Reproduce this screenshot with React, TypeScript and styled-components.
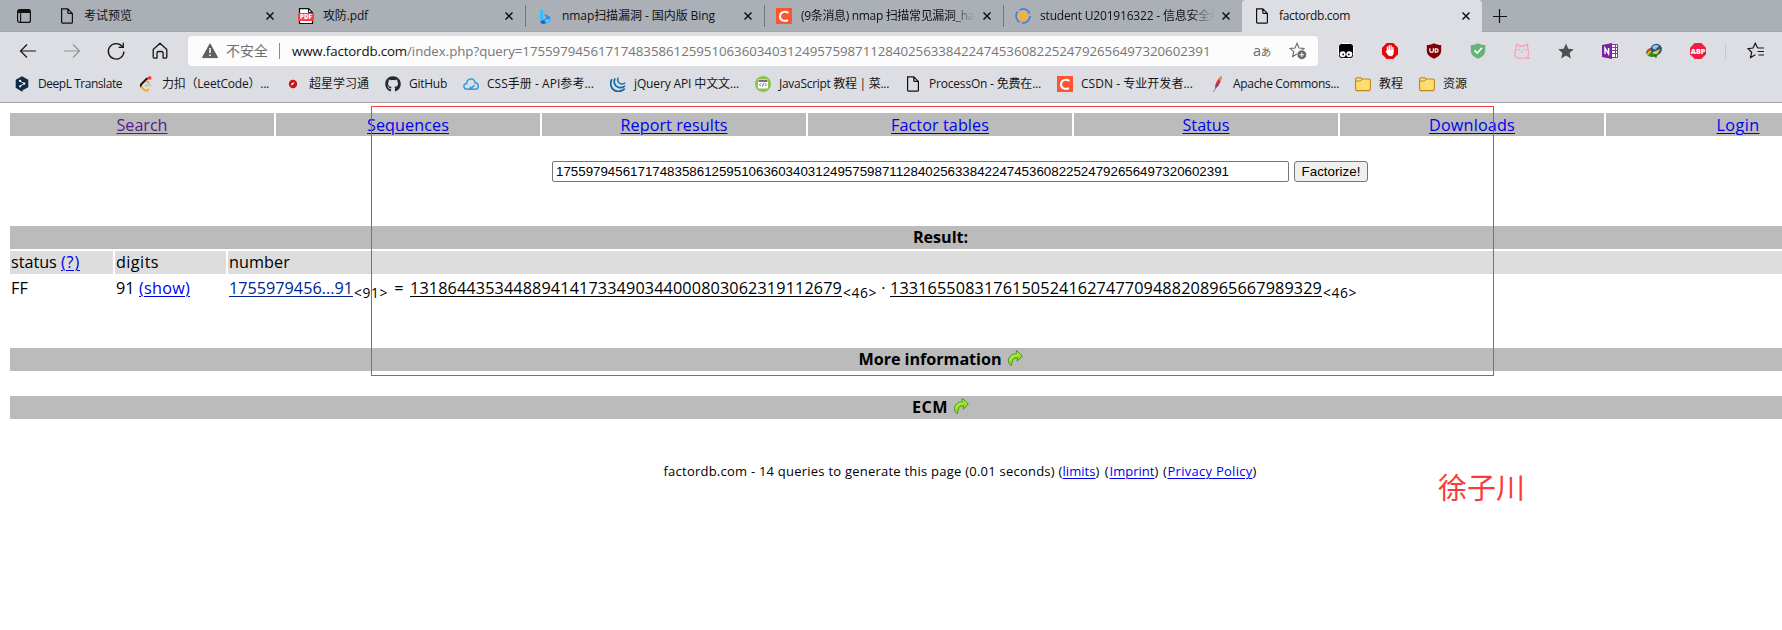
import React, { useLayoutEffect, useRef } from 'react';
import styled, { createGlobalStyle } from 'styled-components';
import { FaGithub } from 'react-icons/fa';

const GlobalStyle = createGlobalStyle`
  *, *::before, *::after { box-sizing: border-box; }
  html, body { margin: 0; padding: 0; background: #fff; overflow: hidden; }
  svg { display: block; flex: none; }
`;

const uiFont = `'Open Sans', 'Noto Sans CJK SC', sans-serif`;

/* ---------- text that is tracked to a given advance width ---------- */

const Tracked = styled.span`
  white-space: pre;
`;

function Fit({ w, children, className }: { w: number; children: React.ReactNode; className?: string }) {
  const ref = useRef<HTMLSpanElement>(null);
  useLayoutEffect(() => {
    const el = ref.current;
    if (!el) return;
    el.style.letterSpacing = '0px';
    const n = (el.textContent || '').length;
    el.style.letterSpacing = `${(w - el.getBoundingClientRect().width) / n}px`;
  }, [w]);
  return <Tracked ref={ref} className={className}>{children}</Tracked>;
}

/* ---------- browser frame ---------- */

const Screen = styled.div`
  position: relative;
  width: 1782px;
  height: 630px;
  overflow: hidden;
  background: #fff;
  font-family: ${uiFont};
`;

const TabStrip = styled.div`
  display: flex;
  height: 32px;
  background: #abafb6;
  box-shadow: inset 0 -1px 0 #a1a4ac;
`;

const TabMenu = styled.div`
  display: flex;
  align-items: center;
  width: 47px;
  padding-left: 17px;
`;

const Tab = styled.div<{ $active?: boolean; $divider?: boolean }>`
  display: flex;
  align-items: center;
  width: ${p => (p.$active ? 240 : 239)}px;
  height: 32px;
  padding: 0 12px 0 11px;
  border-left: 1px solid transparent;
  border-image: ${p => (p.$divider ? 'linear-gradient(transparent 6px, #73767c 6px, #73767c 26px, transparent 26px) 1' : 'none')};
  background: ${p => (p.$active ? '#dddee3' : 'transparent')};
  border-radius: ${p => (p.$active ? '4px 4px 0 0' : '0')};
`;

const TabTitle = styled.div<{ $fade?: boolean }>`
  flex: 1;
  min-width: 0;
  margin-left: 9px;
  margin-right: 8px;
  overflow: hidden;
  white-space: nowrap;
  font-size: 12px;
  line-height: 20px;
  color: #111;
  ${p => p.$fade && 'mask-image: linear-gradient(90deg, #000 calc(100% - 24px), transparent);'}
`;

const NewTab = styled.div`
  display: flex;
  align-items: center;
  padding-left: 11px;
`;

const Toolbar = styled.div`
  display: flex;
  align-items: center;
  height: 38px;
  background: #dddee3;
`;

const NavButtons = styled.div`
  display: flex;
  gap: 24px;
  width: 188px;
  padding-left: 18px;
`;

const AddressBar = styled.div`
  display: flex;
  align-items: center;
  width: 1130px;
  height: 30px;
  padding: 0 11px 0 14px;
  background: #fcfcfd;
  border-radius: 4px;
`;

const Insecure = styled.span`
  flex: none;
  margin-left: 8px;
  margin-right: 11px;
  width: 42px;
  font-size: 14px;
  line-height: 20px;
  color: #707070;
  white-space: nowrap;
`;

const Divider = styled.span<{ $light?: boolean }>`
  flex: none;
  width: 1px;
  height: 16px;
  background: ${p => (p.$light ? '#c6c7cb' : '#8a8a8a')};
`;

const Url = styled.span`
  flex: none;
  display: flex;
  margin-left: 12px;
  font-size: 13.3px;
  line-height: 20px;
  color: #767676;
`;

const Host = styled(Fit)`
  color: #111;
`;

const Translate = styled.span`
  flex: none;
  width: 18px;
  margin-left: auto;
  margin-right: 18px;
  font-size: 14.5px;
  line-height: 20px;
  letter-spacing: -0.3px;
  color: #6a6a6a;
  white-space: nowrap;
`;

const SmallKana = styled.span`
  font-size: 10.5px;
`;

const Extensions = styled.div`
  display: flex;
  align-items: center;
  gap: 28px;
  padding-left: 20px;
`;

const ExtensionEnd = styled.div`
  display: flex;
  align-items: center;
  gap: 21px;
  padding-left: 19px;
`;

const Bookmarks = styled.div`
  display: flex;
  align-items: flex-start;
  gap: 16px;
  height: 33px;
  padding: 4px 0 0 14px;
  background: #dddee3;
  border-bottom: 1px solid #a0a1a6;
`;

const Bookmark = styled.div`
  display: flex;
  align-items: center;
  gap: 8px;
  height: 20px;
  font-size: 12px;
  line-height: 20px;
  color: #161616;
`;

/* ---------- page ---------- */

const Page = styled.div`
  width: 1920px;
  padding-top: 10px;
  font-size: 16.2px;
  line-height: 23px;
  color: #000;
`;

const Sheet = styled.div`
  width: 1860px;
  margin-left: 10px;
`;

const Menu = styled.nav`
  display: grid;
  grid-template-columns: repeat(7, 264px);
  gap: 2px;
`;

const MenuCell = styled.div`
  height: 23px;
  padding-top: 1px;
  text-align: center;
  background: #bbb;
`;

const Link = styled.a<{ $color?: string }>`
  color: ${p => p.$color || '#0000ee'};
  text-decoration: underline;
  text-decoration-thickness: 1px;
  text-underline-offset: 2px;
  text-decoration-skip-ink: auto;
`;

const Query = styled.form`
  display: flex;
  justify-content: center;
  gap: 5px;
  margin-top: 25px;
`;

const QueryInput = styled.div`
  width: 737px;
  height: 21px;
  padding: 0 3px;
  border: 1px solid #767676;
  border-radius: 2px;
  font: 13.333px/19px 'Liberation Sans', Arial, sans-serif;
`;

const Submit = styled.button`
  width: 74px;
  height: 21px;
  padding: 0;
  border: 1px solid #767676;
  border-radius: 3px;
  background: #efefef;
  color: #000;
  font: 13.333px/19px 'Liberation Sans', Arial, sans-serif;
`;

const Bar = styled.div<{ $top: number }>`
  display: flex;
  justify-content: center;
  gap: 5px;
  height: 23px;
  margin-top: ${p => p.$top}px;
  padding-left: 1px;
  background: #bbb;
  font-weight: 700;
`;

const Row = styled.div<{ $head?: boolean }>`
  display: grid;
  grid-template-columns: 103px 111px 1642px;
  gap: 2px;
  height: 23px;
  margin-top: 2px;
  > div {
    padding-top: ${p => (p.$head ? 0 : 1)}px;
    padding-left: 1px;
    white-space: nowrap;
    background: ${p => (p.$head ? '#ddd' : 'transparent')};
  }
`;

const Factors = styled.div`
  display: flex;
`;

const Sub = styled(Fit)`
  margin-left: 1px;
  padding-top: 4px;
  font-size: 13.8px;
`;

const Operator = styled.span<{ $w: number }>`
  width: ${p => p.$w}px;
  text-align: center;
`;

const Footer = styled.footer`
  margin-top: 41px;
  text-align: center;
  font-size: 13px;
  white-space: nowrap;
`;

const Frame = styled.div`
  position: absolute;
  left: 371px;
  top: 106px;
  width: 1123px;
  height: 270px;
  border: 1px solid #fb3a3a;
`;

const Signature = styled.div`
  position: absolute;
  left: 1438px;
  top: 468px;
  font-size: 29px;
  line-height: 40px;
  color: #fb3a3a;
  white-space: nowrap;
`;

/* ---------- icons ---------- */

const Svg = ({ s = 16, children }: { s?: number; children: React.ReactNode }) => (
  <svg width={s} height={s} viewBox={`0 0 ${s} ${s}`} fill="none">{children}</svg>
);

const PageIcon = () => (
  <Svg><path d="M2.600.800h6.200l4.600 4.600v8.800a1 1 0 0 1-1 1H3.600a1 1 0 0 1-1-1zM8.800.800v3.600a1 1 0 0 0 1 1h3.600" stroke="#111" strokeWidth="1.200" /></Svg>
);
const CloseIcon = () => (
  <svg width="8" height="8" viewBox="0 0 8 8"><path d="M.5.5l7 7M7.500.500l-7 7" stroke="#111" strokeWidth="1.500" /></svg>
);
const TabsIcon = () => (
  <svg width="14" height="14" viewBox="0 0 14 14" fill="none">
    <rect x=".6" y=".6" width="12.800" height="12.800" rx="2" stroke="#111" strokeWidth="1.200" />
    <path d="M1 1h12v3H1z" fill="#111" /><path d="M3.600 4v9.400" stroke="#111" strokeWidth="1.100" />
  </svg>
);
const PdfIcon = () => (
  <Svg>
    <path d="M1.500.600h9l4 4v11h-13z" fill="#fff" stroke="#111" strokeWidth="1.200" />
    <path d="M10.500.600v4h4" stroke="#111" />
    <rect x="0" y="5" width="16" height="8" rx="1" fill="#fb4141" />
    <text x="8" y="11.400" textAnchor="middle" fontFamily="Open Sans" fontWeight="800" fontSize="6.200" fill="#fff">PDF</text>
  </Svg>
);
const BingIcon = () => (
  <Svg>
    <path d="M3 1l3.100 1.400v9.400L3 14z" fill="#37bdf8" />
    <path d="M6.900 5.700l5 2.300c1.400.700 1.700 1.800 1.600 3L10 9.600 8.500 9z" fill="#2f8fe8" />
    <path d="M3 14l3.500-2.200L10.300 9.600l2.900.9c.5 1.800-.5 3-1.700 3.700L8 15.800c-2.200.5-4-.2-5-1.800z" fill="#1a62dc" />
    <path d="M7 11.500l5.800-1.300c1 1.800 0 3.200-1.400 4L9 15.600z" fill="#41cdf5" />
  </Svg>
);
const CsdnIcon = () => (
  <Svg>
    <rect width="16" height="16" fill="#fc5531" />
    <path d="M12.400 4.800C8.600 2.500 4.200 4.200 4 8.200c-.1 4.300 4.200 5.600 8 3.900" stroke="#fff" strokeWidth="2" />
  </Svg>
);
const RingIcon = () => (
  <Svg>
    <circle cx="8" cy="8" r="7" stroke="#3d7cd0" strokeWidth="1.500" strokeDasharray="12 2.600" />
    <circle cx="8" cy="8" r="5" fill="#f0b23e" />
  </Svg>
);
const PlusIcon = () => (
  <svg width="14" height="14" viewBox="0 0 14 14"><path d="M6.500 0v14M0 7.500h14" stroke="#111" strokeWidth="1.200" /></svg>
);
const BackIcon = ({ forward }: { forward?: boolean }) => (
  <Svg s={20}>
    <path d={forward ? 'M2 10h16M11 3.500l6.500 6.500-6.500 6.500' : 'M18 10H2M9 3.500L2.500 10 9 16.500'} stroke={forward ? '#929397' : '#151515'} strokeWidth="1.200" />
  </Svg>
);
const ReloadIcon = () => (
  <Svg s={20}><path d="M17.900 10.500A7.800 7.800 0 1 1 16.300 5.600M17.300 1.800v4.500h-4.700" stroke="#151515" strokeWidth="1.300" /></Svg>
);
const HomeIcon = () => (
  <Svg s={20}><path d="M3.200 8.500L10 2.300l6.800 6.200v7.600a1 1 0 0 1-1 1h-2.700V12a1.500 1.500 0 0 0-1.500-1.500H8.500A1.500 1.500 0 0 0 7 12v5.100H4.200a1 1 0 0 1-1-1z" stroke="#151515" strokeWidth="1.300" strokeLinejoin="round" /></Svg>
);
const WarnIcon = () => (
  <Svg><path d="M8 .8l7.600 13.800H.4z" fill="#5f5f5f" stroke="#5f5f5f" strokeLinejoin="round" /><path d="M8 5v5M8 11.400v1.600" stroke="#fff" strokeWidth="1.500" /></Svg>
);
const StarAddIcon = () => (
  <Svg s={18}>
    <path d="M8 1.300l2 4.700 5 .4-3.800 3.300 1.100 4.700L8 12l-4.400 2.700 1.200-5L1 6.400 6 6z" stroke="#6a6a6a" strokeWidth="1.100" />
    <circle cx="12.800" cy="12.700" r="4.700" fill="#666" stroke="#fcfcfd" strokeWidth=".6" />
    <path d="M12.800 10.400V15M10.500 12.700h4.600" stroke="#fff" strokeWidth="1.100" />
  </Svg>
);
const TamperIcon = () => (
  <Svg>
    <rect x=".5" y=".5" width="15" height="15" rx="3" fill="#000" stroke="#fff" />
    <circle cx="4.700" cy="11.200" r="3" fill="#fff" /><circle cx="11.300" cy="11.200" r="3" fill="#fff" />
    <circle cx="5.200" cy="11.400" r=".9" fill="#000" /><circle cx="10.800" cy="11.400" r=".9" fill="#000" />
  </Svg>
);
const octagon = 'M4.700 0h6.600L16 4.700v6.600L11.300 16H4.700L0 11.300V4.700z';
const AdblockIcon = () => (
  <Svg>
    <path d={octagon} fill="#e5090f" />
    <path d="M5.500 8V4.200M7.300 7.500V2.800M9.100 7.500V3M10.900 8V4.500" stroke="#fff" strokeWidth="1.400" strokeLinecap="round" />
    <path d="M4.800 7h6.800v3c0 2-1 3.200-3 3.200-1.700 0-2.600-.8-3.300-2.200L3.500 8.400l1-.5z" fill="#fff" />
  </Svg>
);
const ShieldIcon = ({ fill, children }: { fill: string; children: React.ReactNode }) => (
  <Svg><path d="M8 .2c2 1.200 4.400 1.700 7.200 1.800v5.500c0 4-3 6.600-7.200 8.300C3.800 14.100.8 11.500.8 7.500V2C3.600 1.900 6 1.400 8 .2z" fill={fill} />{children}</Svg>
);
const UblockIcon = () => (
  <ShieldIcon fill="#800008">
    <path d="M3.900 5.200v2.600c0 2.200 3.500 2.200 3.500 0V5.200M9.200 5.800h1c2.600 0 2.600 3.300 0 3.300h-1z" stroke="#fff" strokeWidth="1.200" />
  </ShieldIcon>
);
const GuardIcon = () => (
  <ShieldIcon fill="#67b279"><path d="M4.500 7.300l2.700 2.800 4.800-5.300" stroke="#fff" strokeWidth="1.700" /></ShieldIcon>
);
const CatIcon = () => (
  <Svg><path d="M2.200 5.500L2.600.900l3 2.100h4.800l3-2.100.4 4.600c1 3 .8 6 .1 8.300l1.400 1.400H4.200C.2 15 .3 8.500 2.200 5.500zM3.800 6.700h2.800M9.400 6.700h2.800M7 8.800h2" stroke="#f9a0b8" strokeWidth="1.300" strokeLinejoin="round" /></Svg>
);
const StarIcon = () => (
  <Svg><path d="M8 .5l2.300 5.200 5.500.5-4.200 3.700 1.300 5.600L8 12.600l-4.900 2.900 1.300-5.600L.2 6.200l5.500-.5z" fill="#4f5052" /></Svg>
);
const OneNoteIcon = () => (
  <Svg>
    <path d="M8 1.500h7.500v13H8z" fill="#fff" stroke="#8a35ad" />
    <path d="M9 4.500h6M9 7.500h6M9 10.500h6M13.500 2v12" stroke="#8a35ad" />
    <path d="M0 2l10-2v16L0 14z" fill="#7a24a1" />
    <path d="M3 11V5.200l3.600 5.600V5" stroke="#fff" strokeWidth="1.400" />
  </Svg>
);
const IdmIcon = () => (
  <Svg>
    <ellipse cx="6.500" cy="9.500" rx="6.400" ry="4.600" fill="#2f8c2d" />
    <path d="M.8 10C2 6.600 5 5 8 5.500" stroke="#e8402a" strokeWidth="1.500" />
    <path d="M1.500 12c1-2.500 3.500-4.500 6-4" stroke="#f8d126" strokeWidth="1.500" />
    <circle cx="10.300" cy="6.300" r="5.600" fill="#27567f" />
    <path d="M6.500 3.500c2-2 5-2 6.500-.5-1 1.800-2.500 1-3 3.500-2 .5-4-1-3.500-3z" fill="#8cc6e6" />
    <path d="M6.500 9.300L14.500 6 11 11.500 7.500 11z" fill="#f2c91c" />
    <path d="M8 11.300h3.500L10 15.800z" fill="#246e28" />
  </Svg>
);
const AbpIcon = () => (
  <Svg>
    <path d={octagon} fill="#ed1e45" />
    <text x="8" y="10.600" textAnchor="middle" fontFamily="Open Sans" fontWeight="800" fontSize="7.200" fill="#fff">ABP</text>
  </Svg>
);
const FavoritesIcon = () => (
  <Svg s={18}><path d="M10.500 5.800L8.300 1.300 6 6l-5 .7 3.700 3.500L3.600 15.500 8.300 12.800M10.500 6h6.500M10.500 9.500H17M11.500 13H17" stroke="#151515" strokeWidth="1.200" /></Svg>
);
const DeeplIcon = () => (
  <Svg>
    <path d="M8 .2l6.300 3.500v7.500L8.500 14.300v1.700l-2.400-1.500-4.400-2.800V3.700z" fill="#0f2b46" />
    <path d="M6 5l4.300 2.600L6.300 10" stroke="#fff" strokeWidth=".9" /><circle cx="6" cy="4.900" r="1.100" fill="#fff" /><circle cx="10.300" cy="7.600" r="1.100" fill="#fff" /><circle cx="6.200" cy="10.300" r="1.100" fill="#fff" />
  </Svg>
);
const LeetIcon = () => (
  <Svg>
    <path d="M9 2.500L3.500 8" stroke="#151515" strokeWidth="1.900" strokeLinecap="round" />
    <path d="M3.500 8c-1 1.200-.8 2.200 0 3" stroke="#151515" strokeWidth="1.900" />
    <path d="M3.500 11l2.500 2.700c1.400 1.400 3 1.200 4.500-.2M9 5.300l1.700 1.400" stroke="#fba51f" strokeWidth="1.900" strokeLinecap="round" />
    <path d="M7.500 9.300h5" stroke="#c9c6c2" strokeWidth="2.200" strokeLinecap="round" /><circle cx="11.700" cy="1.900" r="1.900" fill="#ea4444" />
  </Svg>
);
const ChaoxingIcon = () => (
  <Svg><circle cx="8" cy="8" r="4.200" fill="#c9151b" /><path d="M6.300 9.500c-.6-2 1-3.500 3.200-3L8 8.500z" fill="#fff" /></Svg>
);
const CloudIcon = () => (
  <Svg><path d="M4.300 13.300C-.2 13.300-.2 7.600 3.700 7.500 4 1.500 11.500 1.500 12 6.800c4.500.4 4.200 6.500 0 6.500H7.500L11.500 9M4.300 13.300c2 0 2.500-1 4-2.600" stroke="#2e9fe0" strokeWidth="1.500" /></Svg>
);
const JqueryIcon = () => (
  <Svg>
    <path d="M1.900 3.200C-.7 8 1.300 14.200 6.800 15.200c3.300.5 6-.4 8-2.500" stroke="#0f65a8" strokeWidth="1.700" />
    <path d="M5 2.300c-2 3.600-.4 8 3.500 9 2.600.6 5-.1 6.500-1.500" stroke="#0f65a8" strokeWidth="1.700" />
    <path d="M8.300 1.500c-1.500 2.700-.2 5.400 2.300 6.200 2 .5 3.600 0 4.700-1" stroke="#1673b5" strokeWidth="1.500" />
  </Svg>
);
const RunoobIcon = () => (
  <Svg>
    <circle cx="8" cy="8" r="8" fill="#8bc34a" />
    <rect x="3" y="3.500" width="10" height="9" rx="1" fill="#fff" /><path d="M3.500 5h9" stroke="#38474f" strokeWidth="1.500" />
    <path d="M6 7.300L4.500 8.800 6 10.300M10 7.300l1.500 1.500-1.500 1.500M8.500 7l-1 3.500" stroke="#38474f" strokeWidth=".8" />
  </Svg>
);
const FeatherIcon = () => (
  <Svg>
    <path d="M12.300 0c.7 3-1 7-3 9.800L6 12.800C5.500 9 8.500 3 12.300 0z" fill="#d22d45" />
    <path d="M12.300 0c.6 2 .1 4-.7 6L9.500 3z" fill="#f38a2c" /><path d="M8 8.500l1.700.8L6 12.800c-.1-1.500.8-3 2-4.300z" fill="#803590" /><path d="M7 11l-2.500 5" stroke="#a477a4" />
  </Svg>
);
const FolderIcon = () => (
  <Svg><path d="M.6 3a1.300 1.300 0 0 1 1.300-1.300H5.500L7.300 3h6.800a1.300 1.300 0 0 1 1.300 1.300v9a1.300 1.300 0 0 1-1.300 1.300H1.900a1.300 1.300 0 0 1-1.300-1.300z" fill="#ffdb74" stroke="#b98a12" strokeWidth="1.100" /><path d="M.8 5h4.700l1.800-2" stroke="#b98a12" /></Svg>
);
const GoSvg = styled.svg`
  margin-top: 1px;
`;
const GoIcon = () => (
  <GoSvg width="16" height="17" viewBox="0 0 16 17">
    <path d="M9.300 1.400L15.300 7l-5 5.200V9C6.500 8.500 5 11.500 4.500 16.500 0 15.500-.3 5.300 9.300 4.800z" fill="#8fdc20" stroke="#479414" strokeLinejoin="round" />
    <path d="M10 3.500L13.300 6.800M3 11.500c.2-3.500 2.700-5.500 7-5.300" stroke="#d5f684" fill="none" />
  </GoSvg>
);

/* ---------- data ---------- */

const N = '1755979456171748358612595106360340312495759871128402563384224745360822524792656497320602391';

const tabs = [
  { icon: <PageIcon />, title: '考试预览', w: 48 },
  { icon: <PdfIcon />, title: '攻防.pdf', w: 45 },
  { icon: <BingIcon />, title: 'nmap扫描漏洞 - 国内版 Bing', w: 153, divider: true },
  { icon: <CsdnIcon />, title: '(9条消息) nmap 扫描常见漏洞_ha', w: 173, divider: true, fade: true },
  { icon: <RingIcon />, title: 'student U201916322 - 信息安全综', w: 182, divider: true, fade: true },
  { icon: <PageIcon />, title: 'factordb.com', w: 71, active: true },
];

const bookmarks = [
  { icon: <DeeplIcon />, title: 'DeepL Translate', w: 84 },
  { icon: <LeetIcon />, title: '力扣（LeetCode）...', w: 107 },
  { icon: <ChaoxingIcon />, title: '超星学习通', w: 60 },
  { icon: <FaGithub size={16} color="#24292e" />, title: 'GitHub', w: 38 },
  { icon: <CloudIcon />, title: 'CSS手册 - API参考...', w: 107 },
  { icon: <JqueryIcon />, title: 'jQuery API 中文文...', w: 105 },
  { icon: <RunoobIcon />, title: 'JavaScript 教程 | 菜...', w: 110 },
  { icon: <PageIcon />, title: 'ProcessOn - 免费在...', w: 112 },
  { icon: <CsdnIcon />, title: 'CSDN - 专业开发者...', w: 112 },
  { icon: <FeatherIcon />, title: 'Apache Commons...', w: 106 },
  { icon: <FolderIcon />, title: '教程', w: 24 },
  { icon: <FolderIcon />, title: '资源', w: 24 },
];

const menu = [
  { title: 'Search', w: 51, color: '#551a8b' },
  { title: 'Sequences', w: 82 },
  { title: 'Report results', w: 107 },
  { title: 'Factor tables', w: 98 },
  { title: 'Status', w: 47 },
  { title: 'Downloads', w: 86 },
  { title: 'Login', w: 43 },
];

export default function App() {
  return (
    <Screen>
      <GlobalStyle />
      <TabStrip>
        <TabMenu><TabsIcon /></TabMenu>
        {tabs.map(t => (
          <Tab key={t.title} $active={t.active} $divider={t.divider}>
            {t.icon}
            <TabTitle $fade={t.fade}><Fit w={t.w}>{t.title}</Fit></TabTitle>
            <CloseIcon />
          </Tab>
        ))}
        <NewTab><PlusIcon /></NewTab>
      </TabStrip>

      <Toolbar>
        <NavButtons><BackIcon /><BackIcon forward /><ReloadIcon /><HomeIcon /></NavButtons>
        <AddressBar>
          <WarnIcon />
          <Insecure>不安全</Insecure>
          <Divider />
          <Url>
            <Host w={115}>www.factordb.com</Host>
            <Fit w={803.5}>{`/index.php?query=${N}`}</Fit>
          </Url>
          <Translate>a<SmallKana>あ</SmallKana></Translate>
          <StarAddIcon />
        </AddressBar>
        <Extensions>
          <TamperIcon /><AdblockIcon /><UblockIcon /><GuardIcon /><CatIcon />
          <StarIcon /><OneNoteIcon /><IdmIcon /><AbpIcon />
        </Extensions>
        <ExtensionEnd><Divider $light /><FavoritesIcon /></ExtensionEnd>
      </Toolbar>

      <Bookmarks>
        {bookmarks.map(b => (
          <Bookmark key={b.title}>{b.icon}<Fit w={b.w}>{b.title}</Fit></Bookmark>
        ))}
      </Bookmarks>

      <Page>
        <Sheet>
          <Menu>
            {menu.map(m => (
              <MenuCell key={m.title}><Link $color={m.color}><Fit w={m.w}>{m.title}</Fit></Link></MenuCell>
            ))}
          </Menu>
        </Sheet>
        <Query>
          <QueryInput><Fit w={673}>{N}</Fit></QueryInput>
          <Submit type="button"><Fit w={59}>Factorize!</Fit></Submit>
        </Query>
        <Sheet>
          <Bar $top={44}><Fit w={55}>Result:</Fit></Bar>
          <Row $head>
            <div><Fit w={50}>{'status '}</Fit><Link><Fit w={19}>(?)</Fit></Link></div>
            <div><Fit w={43}>digits</Fit></div>
            <div><Fit w={61}>number</Fit></div>
          </Row>
          <Row>
            <div><Fit w={17}>FF</Fit></div>
            <div><Fit w={23}>{'91 '}</Fit><Link><Fit w={51}>(show)</Fit></Link></div>
            <Factors>
              <Link $color="#00238e"><Fit w={124}>1755979456...91</Fit></Link>
              <Sub w={34}>{'<91>'}</Sub>
              <Operator $w={22}>=</Operator>
              <Link $color="#000"><Fit w={432}>1318644353448894141733490344000803062319112679</Fit></Link>
              <Sub w={34}>{'<46>'}</Sub>
              <Operator $w={13}>·</Operator>
              <Link $color="#000"><Fit w={432}>1331655083176150524162747709488208965667989329</Fit></Link>
              <Sub w={34}>{'<46>'}</Sub>
            </Factors>
          </Row>
          <Bar $top={49}><Fit w={143}>More information</Fit><GoIcon /></Bar>
          <Bar $top={25}><Fit w={36}>ECM</Fit><GoIcon /></Bar>
        </Sheet>
        <Footer>
          <Fit w={399}>{'factordb.com - 14 queries to generate this page (0.01 seconds) ('}</Fit>
          <Link><Fit w={33}>limits</Fit></Link>
          <Fit w={14}>{') ('}</Fit>
          <Link><Fit w={45}>Imprint</Fit></Link>
          <Fit w={13}>{') ('}</Fit>
          <Link><Fit w={85}>Privacy Policy</Fit></Link>
          <Fit w={4}>)</Fit>
        </Footer>
      </Page>

      <Frame />
      <Signature>徐子川</Signature>
    </Screen>
  );
}
